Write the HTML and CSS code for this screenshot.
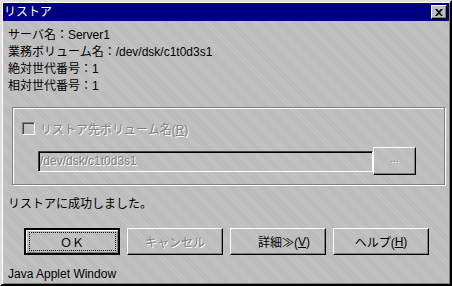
FILE: index.html
```html
<!DOCTYPE html>
<html>

<head>
    <title>リストア</title>
    <meta charset="utf-8">
    <link rel="stylesheet" href="styles.css">
</head>

<body>
    <div class="window">
        <div class="titlebar">
            <span class="title">リストア</span>
            <span class="close">
                <svg width="8" height="7" viewBox="0 0 8 7">
                    <path d="M0 0h2l2 2 2-2h2L5 3.5 8 7H6L4 5 2 7H0l3-3.5z" fill="#000"/>
                </svg>
            </span>
        </div>

        <div class="content">
            <div class="info">
                <div>サーバ名：Server1</div>
                <div>業務ボリューム名：/dev/dsk/c1t0d3s1</div>
                <div>絶対世代番号：1</div>
                <div>相対世代番号：1</div>
            </div>

            <div class="group">
                <label class="check disabled">
                    <span class="box"></span>
                    <span>リストア先ボリューム名(<u>R</u>)</span>
                </label>
                <div class="path">
                    <div class="field disabled">/dev/dsk/c1t0d3s1</div>
                    <div class="btn browse disabled"><span>...</span></div>
                </div>
            </div>

            <div class="message">リストアに成功しました。</div>

            <div class="buttons">
                <div class="btn default"><span class="focus">ＯＫ</span></div>
                <div class="btn disabled">キャンセル</div>
                <div class="btn details">詳細≫(<u>V</u>)</div>
                <div class="btn">ヘルプ(<u>H</u>)</div>
            </div>

            <div class="footer">Java Applet Window</div>
        </div>
    </div>
</body>

</html>
```

FILE: styles.css
```css
* { box-sizing: border-box; margin: 0; padding: 0; }
body { font-family: "Liberation Sans", "Noto Sans CJK JP", sans-serif; font-size: 12px; color: #000; background: #c0c0c0; }
u { text-decoration: underline; }

.window { width: 452px; height: 286px; display: flex; flex-direction: column; padding: 1px;
    background: repeating-linear-gradient(45deg, #c4c4c4 0 1px, #b9b9b9 1px 2px);
    border: 2px solid; border-color: #dfdfdf #000 #000 #dfdfdf;
    box-shadow: inset 1px 1px 0 #fff, inset -1px -1px 0 #808080; }

.titlebar { height: 18px; background: #000080; color: #fff; display: flex; align-items: center; justify-content: space-between; padding: 0 2px 0 1px; }
.title { line-height: 18px; }
.close { width: 16px; height: 14px; background: #c0c0c0; display: flex; align-items: center; justify-content: center;
    border: 1px solid; border-color: #fff #000 #000 #fff; box-shadow: inset -1px -1px 0 #808080; }

.content { flex: 1; display: flex; flex-direction: column; padding: 5px 4px 0 5px; }
.info { line-height: 17px; margin-top: 1px; }

.group { margin: 12px 0 0 4px; height: 78px; border: 1px solid #808080; box-shadow: 1px 1px 0 #fff, inset 1px 1px 0 #fff; padding: 14px 0 0 9px; }
.disabled { color: #808080; text-shadow: 1px 1px 0 #fff; }
.check { display: flex; align-items: center; gap: 5px; height: 13px; }
.box { width: 13px; height: 13px; border: 1px solid; border-color: #808080 #fff #fff #808080; box-shadow: inset 1px 1px 0 #404040; }
.path { display: flex; align-items: center; margin: 12px 0 0 16px; }
.field { width: 335px; height: 21px; line-height: 19px; padding-left: 1px; border: 1px solid; border-color: #404040 #fff #fff #404040; box-shadow: inset 1px 1px 0 #000; }

.message { margin-top: 11px; line-height: 17px; }

.buttons { display: flex; gap: 7px; margin: 15px 0 0 16px; }
.btn { width: 96px; height: 27px; flex: none; display: flex; align-items: center; justify-content: center;
    border: 1px solid; border-color: #fff #000 #000 #fff; box-shadow: inset -1px -1px 0 #808080; }
.btn.default { border: 2px solid #000; box-shadow: inset 1px 1px 0 #fff, inset -1px -1px 0 #808080; }
.btn.browse { width: 43px; height: 28px; }
.btn.browse span { margin-top: -6px; font-size: 10px; }
.focus { width: 87px; height: 19px; border: 1px dotted #000; display: flex; align-items: center; justify-content: center; }
.details { padding-left: 12px; }

.footer { margin-top: auto; line-height: 16px; padding-bottom: 1px; }
```
